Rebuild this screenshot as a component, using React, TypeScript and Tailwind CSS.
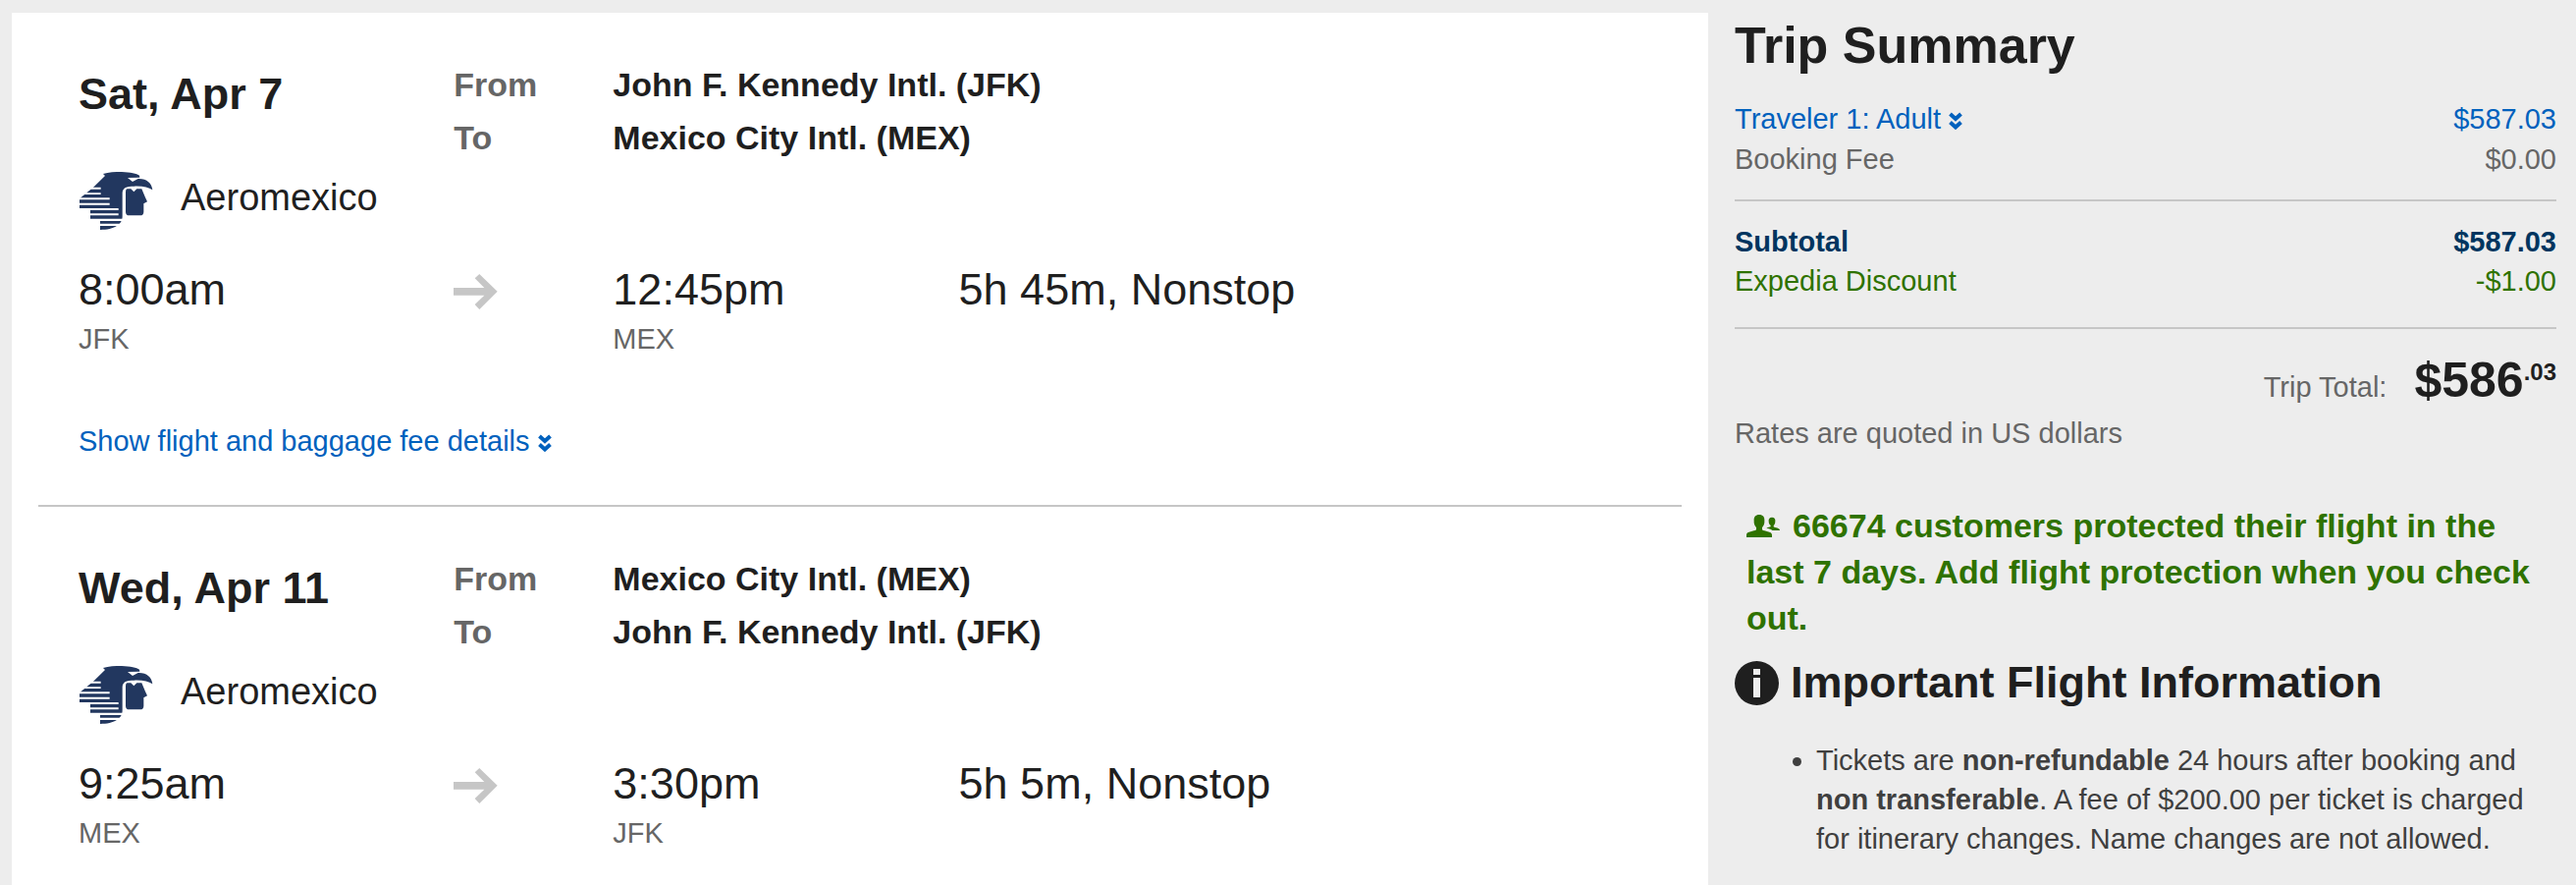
type FlightLeg = {
  date: string;
  airline: string;
  from: string;
  to: string;
  departTime: string;
  departCode: string;
  arriveTime: string;
  arriveCode: string;
  duration: string;
  showDetails?: boolean;
};

const legs: FlightLeg[] = [
  {
    date: "Sat, Apr 7",
    airline: "Aeromexico",
    from: "John F. Kennedy Intl. (JFK)",
    to: "Mexico City Intl. (MEX)",
    departTime: "8:00am",
    departCode: "JFK",
    arriveTime: "12:45pm",
    arriveCode: "MEX",
    duration: "5h 45m, Nonstop",
    showDetails: true,
  },
  {
    date: "Wed, Apr 11",
    airline: "Aeromexico",
    from: "Mexico City Intl. (MEX)",
    to: "John F. Kennedy Intl. (JFK)",
    departTime: "9:25am",
    departCode: "MEX",
    arriveTime: "3:30pm",
    arriveCode: "JFK",
    duration: "5h 5m, Nonstop",
  },
];

function AeromexicoLogo() {
  return (
    <svg viewBox="30 6 240 204" className="h-[68px] w-20 shrink-0" aria-hidden="true">
      <g fill="#22375f">
        <path d="M105 36C122 31 142 30 162 30C188 31 208 35 216 41L217 47L180 48L195 60L212 51C238 50 254 64 256 85C244 77 226 73 200 74C176 74 165 78 164 94V165C164 174 162 184 150 193C135 204 116 207 96 207V176H66V144H33V112L75 77L111 42Z" />
        <path d="M178 82L190 82L199 91L208 82L223 82L234 108L240 121L229 127V152Q229 163 218 163H185Q174 163 174 152V91Q174 84 178 82Z" />
      </g>
      <path
        fill="#fff"
        d="M30 77H98V83H30ZM30 94H98V99H30ZM30 109H125V115H30ZM30 125H125V131H30ZM30 141H152V147H30ZM60 157H152V163H60ZM60 173H166V180H60ZM90 188H166V195H90Z"
      />
    </svg>
  );
}

function ArrowIcon() {
  return (
    <svg viewBox="36 27 144 120" className="h-10 w-12" aria-hidden="true">
      <path fill="#c6c6c6" d="M36 81H130L101 52L115 39L170 92L115 147L101 132L130 104H36Z" />
    </svg>
  );
}

function ChevronsIcon() {
  return (
    <svg viewBox="0 0 14 18" className="ml-2 inline-block h-[18px] w-3.5" aria-hidden="true">
      <path d="M1.5 2L7 7L12.5 2M1.5 10.5L7 15.5L12.5 10.5" fill="none" stroke="currentColor" strokeWidth="4" />
    </svg>
  );
}

function PeopleIcon() {
  return (
    <svg viewBox="42 42 105 69" className="mr-3 inline-block h-[23px] w-[35px] align-baseline" aria-hidden="true">
      <g fill="currentColor">
        <path d="M81 42C92 42 98 49 97 60C98 70 94 77 90 81V88C96 94 120 92 120 104V111H42V104C42 92 66 94 72 88V81C68 77 64 70 65 60C64 49 70 42 81 42Z" />
        <path d="M120 50C128 50 131 55 130 62C130 68 128 72 125 75V79C130 83 144 82 144 90H121C116 85 110 84 103 83C108 79 113 81 116 78V75C112 72 110 68 110 62C109 55 112 50 120 50Z" />
      </g>
    </svg>
  );
}

function InfoIcon() {
  return (
    <svg viewBox="0 0 45 45" className="size-[45px] shrink-0" aria-hidden="true">
      <circle cx="22.5" cy="22.5" r="22.5" fill="#1f1f1f" />
      <path fill="#ededed" d="M19 8H26V14H19ZM19 17H26V37H19Z" />
    </svg>
  );
}

function Leg({ leg }: { leg: FlightLeg }) {
  return (
    <section className="pt-[46px] pr-10 pl-[41px]">
      <div className="grid grid-cols-[382fr_1210fr]">
        <h2 className="text-[45px] leading-[74px] font-bold">{leg.date}</h2>
        <dl className="grid grid-cols-[162fr_1048fr] text-[34px] leading-[54px] font-bold">
          <dt className="text-[#666]">From</dt>
          <dd>{leg.from}</dd>
          <dt className="text-[#666]">To</dt>
          <dd>{leg.to}</dd>
        </dl>
      </div>

      <div className="flex items-center gap-6">
        <AeromexicoLogo />
        <span className="text-[38px]">{leg.airline}</span>
      </div>

      <div className="mt-[30px] grid grid-cols-[382fr_162fr_352fr_696fr] text-[45px] leading-[60px]">
        <div>
          <p>{leg.departTime}</p>
          <p className="text-[29px] leading-10 text-[#666]">{leg.departCode}</p>
        </div>
        <div className="flex h-[60px] items-center">
          <ArrowIcon />
        </div>
        <div>
          <p>{leg.arriveTime}</p>
          <p className="text-[29px] leading-10 text-[#666]">{leg.arriveCode}</p>
        </div>
        <p>{leg.duration}</p>
      </div>

      {leg.showDetails && (
        <a href="#details" className="mt-[64px] mb-[45px] block text-[29px] leading-10 text-[#0061bd]">
          Show flight and baggage fee details
          <ChevronsIcon />
        </a>
      )}
    </section>
  );
}

function TripSummary() {
  return (
    <section className="text-[29px] leading-10 text-[#666]">
      <h1 className="text-[52px] leading-[60px] font-bold text-[#1f1f1f]">Trip Summary</h1>

      <div className="mt-[25px] flex justify-between text-[#0061bd]">
        <a href="#traveler">
          Traveler 1: Adult
          <ChevronsIcon />
        </a>
        <span>$587.03</span>
      </div>
      <div className="mt-px flex justify-between">
        <span>Booking Fee</span>
        <span>$0.00</span>
      </div>

      <hr className="my-[21px] border-t-2 border-[#c6c6c6]" />

      <div className="flex justify-between font-bold text-[#00355f]">
        <span>Subtotal</span>
        <span>$587.03</span>
      </div>
      <div className="flex justify-between text-[#2f7200]">
        <span>Expedia Discount</span>
        <span>-$1.00</span>
      </div>

      <hr className="mt-[27px] mb-[22px] border-t-2 border-[#c6c6c6]" />

      <div className="flex items-baseline justify-end gap-7">
        <span>Trip Total:</span>
        <span className="text-[50px] leading-[60px] font-bold text-[#1f1f1f]">
          $586<sup className="static align-[17px] text-[24px] leading-none">.03</sup>
        </span>
      </div>
      <p className="mt-1">Rates are quoted in US dollars</p>
    </section>
  );
}

export default function App() {
  return (
    <main className="grid min-h-screen grid-cols-[1728fr_884fr] bg-[#ededed] pl-3 font-['Liberation_Sans',Arial,sans-serif] text-[#1f1f1f]">
      <div className="mt-[13px] bg-white px-[27px]">
        <Leg leg={legs[0]} />
        <hr className="border-t-2 border-[#c6c6c6]" />
        <Leg leg={legs[1]} />
      </div>

      <aside className="pt-4 pr-5 pl-[27px]">
        <TripSummary />

        <p className="mt-[51px] px-3 text-[34px] leading-[47px] font-bold text-[#2f7200]">
          <PeopleIcon />
          66674 customers protected their flight in the last 7 days. Add flight protection when you check out.
        </p>

        <h2 className="mt-3 flex items-center gap-3 text-[45px] leading-[60px] font-bold">
          <InfoIcon />
          Important Flight Information
        </h2>
        <ul className="mt-[29px] list-disc pl-[83px] text-[29px] leading-10 text-[#3f3f3f]">
          <li>
            Tickets are <b>non-refundable</b> 24 hours after booking and <b>non transferable</b>. A fee of $200.00 per
            ticket is charged for itinerary changes. Name changes are not allowed.
          </li>
        </ul>
      </aside>
    </main>
  );
}
